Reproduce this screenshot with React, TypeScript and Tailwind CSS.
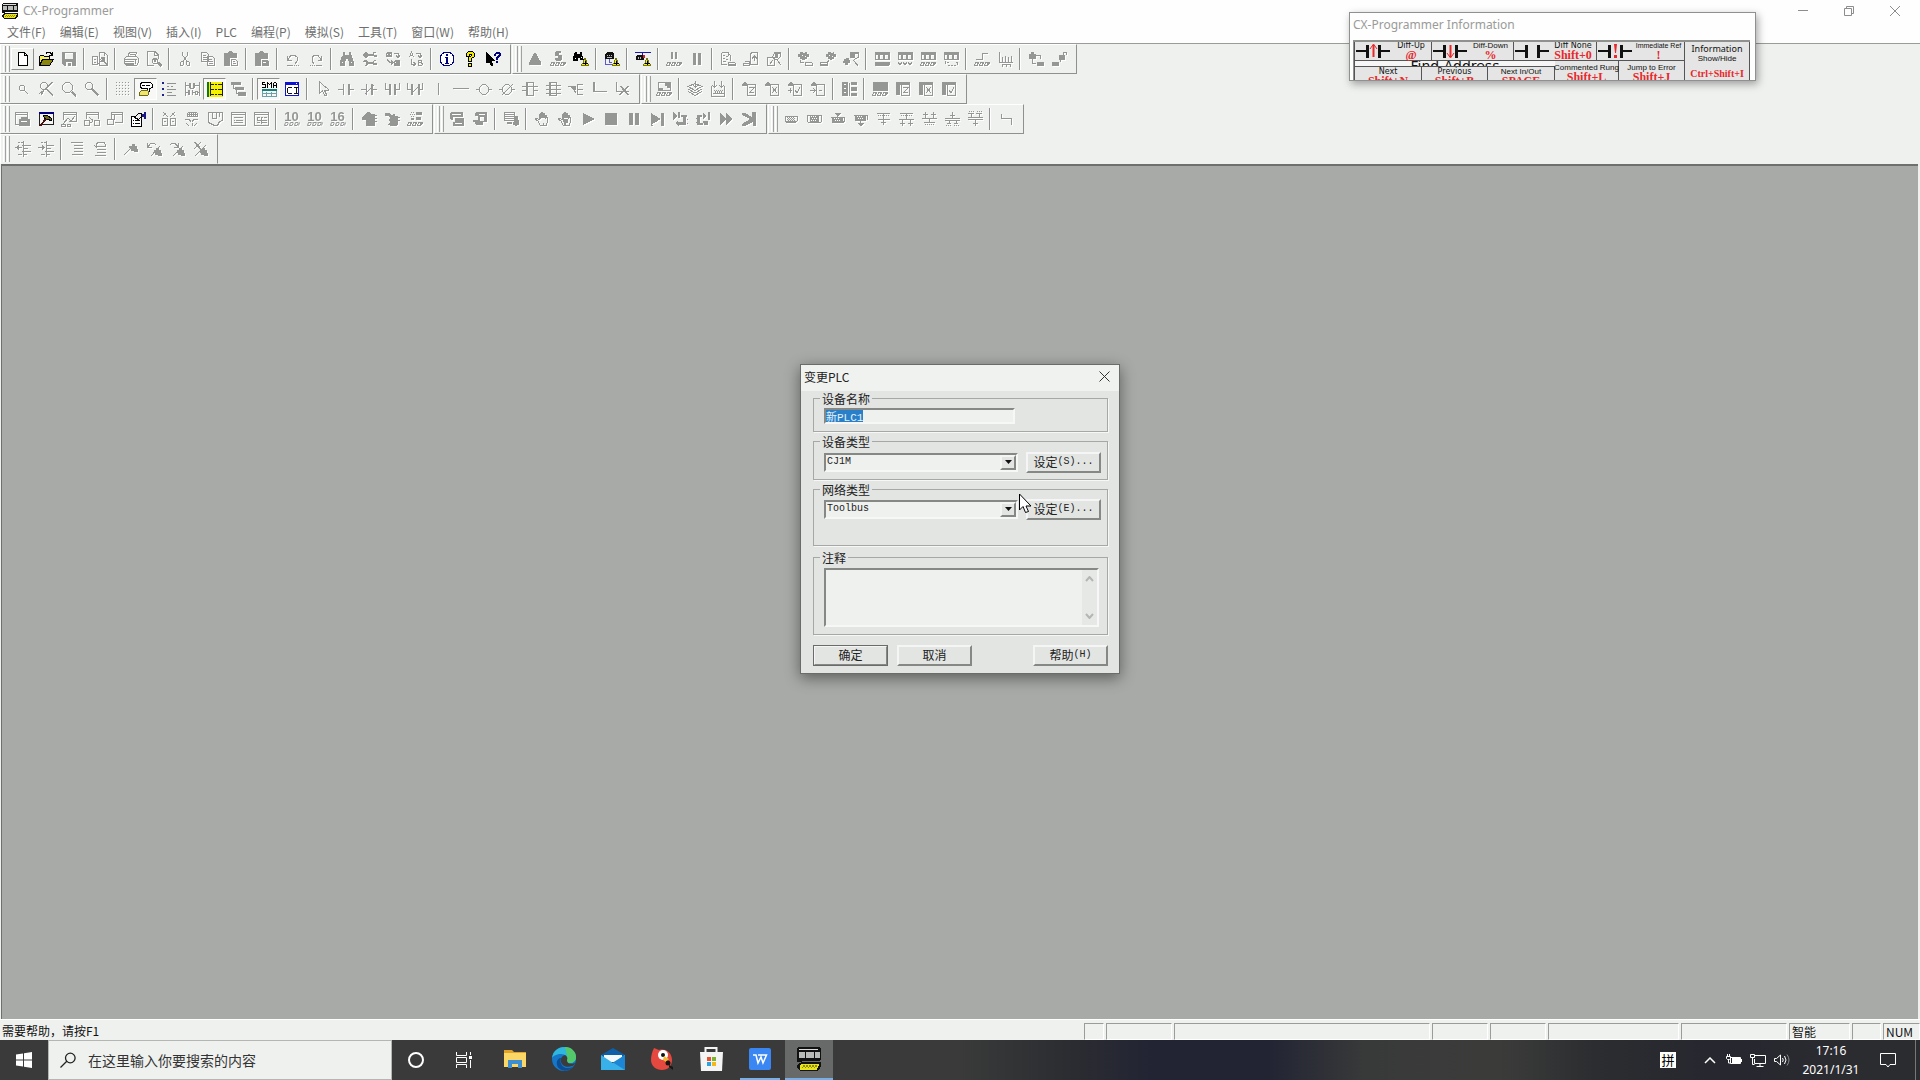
import { useEffect, useRef } from 'react';
import type { ReactNode } from 'react';

interface Glyph {
  f?: string; // filled shapes
  s?: string; // 1px outlines
}

// shared parts of the toolbar drawings
const GLASSES = 'M.5 14.5l1-3h2.5v1l-1 2zM5.5 14.5l1-3h2.5v1l-1 2zM10.5 14.5l1-3h2.5v1l-1 2zM14.5 14.5l1-3';
const CHIP = 'M8.5 11.5h6l1 1v2h-7z';
const COIL = 'M1 1h14l1 1v7H1zM2 4v4h2V4zM6 4v4h3V4zM11 4v4h3V4z';
const HASP = 'M0 5h1V3h1V2h1V1h2v1h1v1h1v2z';
const PAGE = 'M6.5 3.5h8v11h-8z';
const PANEL = 'M1 1h14v3H5v10H1z';
const HAND = 'M5.5 9V3.5l1-1v5M7.5 7V1.5h1V7M9.5 7V2.5h1V7M11.5 8V4.5h1l1 4v3l-2 3h-5l-3-5-2-1v-1h2l2 2M12.5 12v3';

const GLYPHS: Record<string, Glyph> = {
  save: { f: 'M1 1h14v14H3l-2-2zM4 2v6h8V2zM5 11v4h2v-3h3v3h1v-4z' },
  compareDocs: { s: 'M.5 5.5h5v8h-5zM7.5 1.5h5l3 3v10h-8zM12.5 1v4M2 8.5h2M2 11.5h2M6 13l4-4M9 8.5a2 2 0 1 0 4 0a2 2 0 1 0-4 0M12 10l3 4', f: 'M10 7h2v4h-2z' },
  print: { s: 'M4.5 6l2-4.5h7l-2 5M1.5 7.5l2-2h10l2 2v4l-2 3h-10l-2-2zM2 8.5h12M7 3.5h5M6 5.5h5M12.5 9v4', f: 'M2 10h9v1H2zM2 12h9v2H2z' },
  preview: { s: 'M1.5 1v13.5h6M1 .5h8l3 3v4M8.5 1v3h3M6.5 9.5l1-2h3l1 2v2l-1 1h-3l-1-1z', f: 'M8 8h2v3H8zM11 11h2l3 3-1 2h-1l-3-3z' },
  cut: { s: 'M5.5 1v3l4 6M10.5 1v3l-4 6M3.5 11.5l1-1h2v3l-1 1h-2zM9.5 10.5h2l1 1v3h-2l-1-1z' },
  copy: { s: 'M1.5 1.5h5l2 2v7h-7zM7.5 5.5h5l2 2v7h-7zM3 4.5h3M3 6.5h4M3 8.5h4M9 8.5h3M9 10.5h4M9 12.5h4' },
  paste: { f: 'M1 2h4V1h1V0h3v1h1v1h4v5H7v8H1z', s: 'M8.5 8.5h4l2 2v4h-6zM10 10.5h2M10 12.5h3' },
  paste2: { f: 'M1 2h4V1h1V0h3v1h1v1h4v6H7v7H1zM8 9h5l2 2v4H8zM9 11v1h3v-1z' },
  undo: { s: 'M2.5 5v4.5h4M3 9l3-5h3l3 2v4l-2 3M2 14.5h6M9 14.5h1M11 14.5h1M13 14.5h1' },
  redo: { s: 'M13.5 5v4.5h-4M13 9l-3-5H7L4 6v4l2 3M14 14.5H8M7 14.5H6M5 14.5H4M3 14.5H2' },
  find: { f: 'M4 1h2v3h4V1h2v3l1 1 2 6v4h-5v-5H9V8H7v2H6v5H1v-4l2-6 1-1zM3 11v1h1v-1zM12 11v1h1v-1z' },
  replace: { f: 'M1 3l2-2h2l1 2h5V1h3v1h-2v2h3v1l-1 1h-2l-1-1H6L5 7H3L1 5zM1 10l1-1h3l1 2h4l2-2h2v1h-2v2h3v1l-1 1h-2l-2-1H6l-1 2H3l-1-1h2v-3H1z' },
  replaceAll: { f: 'M1 2h1V1h5v5H1zM2 3v1h1V3zM5 3v1h1V3zM9 10h1V9h5v6H9zM10 11v1h1v-1z', s: 'M2 8.5l3 3M9 2.5h4v4M11 4.5l2 2 2-2M4 11.5h4M6 9.5l2 2-2 2' },
  aToB: { s: 'M1.5 6l2-5 2 5M2 4.5h3M8 2.5h4v4M10 4.5l2 2 2-2M3.5 8v5h4M5.5 11l2 2-2 2M10.5 9v5.5h3l1-1-1-2h-3M13 11l1-1-1-1h-3' },
  tri: { f: 'M7 2h2l1 2 1 2 1 2 1 2 1 1v3H2v-3l1-1 1-2 1-2 1-2z' },
  lampGlasses: { s: GLASSES, f: 'M6 0h5v2H9v2h3v4l-2 2H6L5 7h3V5H5V1z' },
  pauseGlasses: { s: GLASSES, f: 'M5 1h2v7H5zM9 1h2v7H9z' },
  pause: { f: 'M4 2h3v12H4zM9 2h3v12H9z' },
  docChip: { s: 'M1.5 1.5h6l3 3v5M1.5 1.5v12h5M3 4.5h2M6 5.5h2M3 7.5h2M6 8.5h2M3 10.5h3' + CHIP, f: 'M9 13h6v1H9zM8 1h1v4H8z' },
  chipDoc: { s: 'M1.5 10.5h5v4h-6v-3M7.5 2.5l2-1h5v12h-7zM11.5 5v5M9 7.5l2.5-2.5L14 7.5', f: 'M1 12h5v1H1z' },
  magDoc: { s: 'M1.5 6.5h7v8h-7zM8.5 1.5h6v4l-3 3h-3l-2-2zM7 9l-3 4M11 9l4 5', f: 'M9 3h3v4H9zM8 1h7v2H8z' },
  cloudChipA: { f: 'M3 1h3v1h2V1h2v2h2v3h-2v2H8v1H5V8H3V6H1V3h2zM5 4v1h1V4zM8 5v1h1V5z', s: 'M3.5 9v2.5H7' + CHIP },
  cloudChipB: { f: 'M8 1h3v1h2V1h1v2h2v3h-2v2h-2v1h-2V8H8V6H6V3h2zM9 4v1h1V4zM12 5v1h1V5z', s: 'M.5 11.5h7v3h-7zM1 13.5h6M9 9.5l-2 2' },
  cloudMag: { f: 'M1 8h2V7h3v2h1v3H5v2H2v-2H0v-2h1zM7 1h9v2H7zM7 3h5v4H7z', s: 'M15.5 2v4l-4 2.5M10 9l5 5.5' },
  plcA: { f: COIL + 'M1 11h15v2l-2 2H1z' },
  plcB: { f: COIL, s: 'M1 11.5l2 2 2-2M6 11.5l2 2 2-2M11 11.5l2 2 2-2' },
  plcC: { f: COIL, s: GLASSES },
  plcD: { f: COIL, s: 'M2.5 10v3M4 11.5h2M5 14.5h2M8 14.5h2M11 14.5h2M13 11.5h2M14.5 12v2' },
  stepGlasses: { s: GLASSES + 'M2 8.5h6v-6h6' },
  trace: { s: 'M2.5 1v10.5h13M5.5 11V6M8.5 11V5M11.5 11V6M14.5 11V5M5.5 13v2.5M9.5 13v2.5M13.5 13v2.5M5 13.5h9' },
  lockChip: { f: 'M1 3h2V1h3v2h2v5H1zM9 11h6l1 1v3H9z', s: 'M8 4.5h4v3M4.5 8v4.5H8' },
  unlockChip: { f: 'M8 4h6v5H8zM1 11h7v4H1z', s: 'M12.5 4V1.5h3V4M9.5 8v3' },
  zoomSmall: { s: 'M4.5 5.5l1-1h3l1 1v3l-1 1h-3l-1-1zM9 9l4 4' },
  zoomCut: { s: 'M2.5 3.5l2-2h3l2 2v3l-2 2h-3l-2-2zM8 8l7 7M9 8l6 6M15 1L5 10l-4 3M14 1L3 12M3 14l3-4' },
  zoomOut: { s: 'M1.5 4.5l3-3h4l3 3v4l-3 3h-4l-3-3zM11 10l4.5 4.5M10 11l5 5M11 11l4 4' },
  zoomIn: { s: 'M1.5 3.5l2-2h3l2 2v3l-2 2h-3l-2-2zM8 7l7 7M7 8l7 7M8 8l6.5 6.5' },
  grid: { f: 'M1 1h1v1H1zM4 1h1v1H4zM7 1h1v1H7zM10 1h1v1h-1zM13 1h1v1h-1zM1 4h1v1H1zM4 4h1v1H4zM7 4h1v1H7zM10 4h1v1h-1zM13 4h1v1h-1zM1 7h1v1H1zM4 7h1v1H4zM7 7h1v1H7zM10 7h1v1h-1zM13 7h1v1h-1zM1 10h1v1H1zM4 10h1v1H4zM7 10h1v1H7zM10 10h1v1h-1zM13 10h1v1h-1zM1 13h1v1H1zM4 13h1v1H4zM7 13h1v1H7zM10 13h1v1h-1zM13 13h1v1h-1z' },
  rungs: { s: 'M1.5 1v14M15.5 1v14M2 4.5h4M10 4.5h5M2 11.5h3M9 11.5h2M14 11.5h1M11.5 10v3h2v-3z', f: 'M5 2h2v5H5zM9 2h2v5H9zM4 9h2v5H4zM8 9h1v5H8zM6 7h4v1H6z' },
  tree: { f: 'M1 1h10v3H1zM5 6h9v3H5zM8 11h8v4H8z', s: 'M3.5 4v3.5h2M6.5 9v3.5h2' },
  arrow: { s: 'M4.5 1v11.5l3-3 2 5h2v-1l-2-4h4v-1z' },
  contactOpen: { f: 'M5 3h1v11H5zM10 3h2v11h-2zM0 8h5v1H0zM12 8h4v1h-4z' },
  contactClosed: { s: 'M4 13l9-9', f: 'M5 3h1v11H5zM10 3h2v11h-2zM0 8h5v1H0zM12 8h4v1h-4z' },
  orOpen: { s: 'M1.5 2v6.5h4M15.5 2v6.5h-4', f: 'M5 3h2v11H5zM10 3h2v11h-2z' },
  orClosed: { s: 'M.5 2v6.5h4M15.5 2v6.5h-4M4 13l9-9', f: 'M4 3h2v11H4zM11 3h2v11h-2z' },
  vline: { f: 'M8 2h1v12H8z' },
  hline: { f: 'M0 7h16v1H0z' },
  coilOut: { f: 'M0 8h4v1H0zM12 8h4v1h-4z', s: 'M6.5 3.5h3l3 3v4l-3 3h-3l-3-3v-4z' },
  coilNot: { f: 'M0 8h4v1H0zM12 8h4v1h-4z', s: 'M6.5 3.5h3l3 3v4l-3 3h-3l-3-3v-4zM3 14L14 3' },
  fb1: { s: 'M4.5 1.5h7v13h-7zM5.5 2v12M0 5.5h16M0 9.5h4M12 9.5h4' },
  fb2: { s: 'M4.5 1.5h7v13h-7zM5.5 2v12M1 4.5h15M1 8.5h15M1 12.5h15' },
  branch: { s: 'M0 5.5h8M3 5l5 7M9.5 3v11M9 3.5h6M9 8.5h6M9 13.5h6', f: 'M3 5h5v4H6z' },
  corner: { f: 'M2 1h2v9h12v1H2z' },
  cornerX: { f: 'M2 1h1v9h12v1H2z', s: 'M5 14l9-9M6 14l9-9M6 5l8 9M7 5l8 9' },
  monitorGlasses: { s: GLASSES + 'M2.5 1.5h12v8h-12z', f: 'M9 1h5v6h-3V5H9zM2 7h5v3H2z' },
  stack: { s: 'M1 5.5l7-3 7 3-7 4zM1 8l7 4 7-4M1 10.5l7 4 7-4M8.5 0v6M6 4l2.5 2.5L11 4M3 7l6 3' },
  stackAll: { s: 'M1.5 5v10h13V5M4 9.5h1M6 9.5h1M8 9.5h1M10 9.5h1M12 9.5h1M3 12.5h11M4.5 0v6M2 4l2.5 2.5L7 4M11.5 0v6M9 4l2.5 2.5L14 4', f: 'M5 10h1v2H5zM7 10h1v2H7zM9 10h1v2H9zM11 10h1v2h-1z' },
  docZ: { f: HASP, s: PAGE + 'M8 6.5h5l-4 5h4' },
  docX: { f: HASP, s: PAGE + 'M8 6l5 6M13 6l-5 6' },
  docOk: { f: HASP, s: PAGE + 'M8 9l2 3 3-6M1 9.5h4M3.5 7v5' },
  docArrow: { f: HASP, s: PAGE + 'M0 9.5h5M3 7l2.5 2.5L3 12M9 9.5h3' },
  film: { f: 'M1 1h6v14H1zM8 2h1v13H8zM10 1h6v3h-6zM10 6h6v4h-6zM10 12h6v3h-6zM3 3v1h2V3zM3 7v1h2V7zM3 11v1h2v-1z' },
  boxGlasses: { s: GLASSES, f: 'M1 1h15v9H1z' },
  panelZ: { f: PANEL, s: PAGE + 'M8 6.5h5l-4 5h4' },
  panelX: { f: PANEL, s: PAGE + 'M8 6l5 6M13 6l-5 6' },
  panelOk: { f: PANEL, s: PAGE + 'M8 9l2 3 3-6' },
  winDoc: { s: 'M.5 1.5h12v12H.5zM1 3.5h11', f: 'M4 8h2V6h6v2h3v7H4zM6 10v1h7v-1z' },
  winTool: { s: 'M2.5 9V1.5h13v9H8M2 3.5h13M2 13l5-6 3 3 4-5M.5 13.5h4v2h-4zM6.5 13.5h3v2h-3z' },
  winPair: { s: 'M2.5 8V1.5h12V8M2 3.5h12M.5 9.5h5v5h-5zM10.5 9.5h5v5h-5zM6 11.5h2M8 8v3M5 6l3 3' },
  winBox: { s: 'M4.5 8V1.5h11v10H8M.5 8.5h6v5h-6zM5 3.5h10M7.5 4v5' },
  split: { s: 'M1.5 7.5h5v7h-5zM9.5 7.5h5v7h-5zM2 1l5 5M14 1L9 6M2 5l3-3M11 2l3 3M3 10.5h2M11 10.5h2' },
  mesh: { s: 'M4.5 1.5h8l1 1v3h-10v-3zM4 3.5h9M1 8.5h4l2 2M14 8.5h-4l-2 2M2 12l3 3M8 12v3M13 12l-3 3', f: 'M5 2h1v3H5zM7 2h1v3H7zM9 2h1v3H9zM11 2h1v3h-1z' },
  map: { s: 'M1.5 1.5h14v8l-3 1-2 4h-3l-6-3zM5.5 2v6M9.5 2v5M5 7.5h5M12.5 2v4' },
  list: { s: 'M1.5 1.5h14v13h-14zM2 3.5h13M4 6.5h9M4 9.5h1M6 9.5h7M4 11.5h9' },
  table: { s: 'M1.5 1.5h14v13h-14zM2 3.5h13M4 6.5h3M8 6.5h2M11 6.5h3M4.5 7v2h3M9 9.5h5M4 11.5h3M9 11.5h5M8.5 6v7' },
  upload: { f: 'M6 1h2l2 2h4v1h2v1h-2v2h2v1h-2v2h2v1h-2v4H5V9H1V6z' },
  download: { f: 'M1 2h4l3 3 1-2h2v2h3v1h2v1h-2v2h2v1h-2v3l-2 2H7l-3-1 2-3-2-2 2-2-2-2H1z' },
  xferGlasses: { s: GLASSES, f: 'M4 1h1v1H4zM6 1h1v1H6zM3 3h1v1H3zM5 3h1v1H5zM7 3h1v1H7zM9 1h6v3H9zM4 5h1v1H4zM6 5h1v1H6zM9 6h5v3H9zM4 7h3v2H4z' },
  cards: { f: 'M1 2l1-1h12v5H4v3H2L1 8zM3 3v1h9V3zM6 7h9v7l-1 1H4v-4h2zM6 12v1h7v-1z' },
  cards2: { f: 'M3 2l1-1h11v9l-1 1h-3v3H4l-1-3H1V9h5V5H3zM7 3v1h6V3zM8 6h4v4H8z' },
  listDoc: { s: 'M1.5 1.5h10v8h-10zM2 3.5h9M2 5.5h9M2 7.5h9', f: 'M11 5h4v4h1v5h-2v1h-2v-1h-2v-3h1zM4 11h5v2H4z' },
  hand: { s: HAND + 'M9.5 12v3' },
  handX: { s: HAND, f: 'M6 8h5v4H9v3H7v-4H6z' },
  play: { f: 'M3 2l12 6-12 6z' },
  stop: { f: 'M2 2h12v12H2z' },
  pauseBig: { f: 'M3 2h4v12H3zM9 2h4v12H9z' },
  stepEnd: { f: 'M2 2l10 6-10 6zM12 2h3v13h-3zM2 14h2v1H2z' },
  stepIn: { f: 'M1 1l5 4-5 4zM6 1h2v6H6zM9 4h6v2h-1v8H7v1l-4-3 3-3v2h5V6H9zM15 8h1v1h-1zM15 12h1v1h-1z' },
  stepOut: { f: 'M2 4h5v2H5v6h4v2H2zM1 7h1v1H1zM1 11h1v1H1zM8 2l4 3-4 3zM13 1h2v8h-2zM8 10h5v4H8z' },
  fast: { f: 'M2 2l6 6-6 6zM8 2l7 6-7 6z' },
  fastEnd: { f: 'M1 2h3l7 4V1h4v14h-3v-4l-8 4H1v-2l8-5-8-4z' },
  fbA: { f: 'M4 6h1v1H4zM6 6h1v1H6zM8 6h1v1H8zM10 6h1v1h-1zM5 7h1v1H5zM7 7h1v1H7zM9 7h1v1H9zM4 8h1v1H4zM6 8h1v1H6zM8 8h1v1H8zM10 8h1v1h-1zM5 9h1v1H5zM7 9h1v1H7zM9 9h1v1H9zM11 9h1v1h-1zM11 7h1v1h-1zM3 10h10v1H3z', s: 'M2 5.5h12.5v4l-2 2h-9l-1-2v-4' },
  fbB: { f: 'M4 4h9v8H4zM5 5v1h1V5zM7 5v1h1V5zM9 5v1h1V5zM6 7v1h1V7zM8 7v1h1V7zM10 7v1h1V7zM5 9v1h1V9zM7 9v1h1V9zM9 9v1h1V9z', s: 'M1.5 4.5h14v6l-1 1h-12l-1-1z' },
  fbC: { f: 'M5 2h7L9 5H8zM3 6h11v6H3zM5 7v1h1V7zM7 7v1h1V7zM9 7v1h1V7zM6 9v1h1V9zM8 9v1h1V9zM10 9v1h1V9z', s: 'M2 6.5h13v4l-1 1M8.5 4v2' },
  fbD: { f: 'M5 12h7l-3 3H8zM3 4h11v6H3zM5 5v1h1V5zM7 5v1h1V5zM9 5v1h1V5zM6 7v1h1V7zM8 7v1h1V7zM10 7v1h1V7z', s: 'M2 4.5h13v4M8.5 10v3' },
  netA: { s: 'M2 2.5h13M3 4.5h1M5 4.5h1M7 4.5h1M9 4.5h1M11 4.5h1M13 4.5h1M8.5 3v11M3 8.5h12M6 11.5h5' },
  netB: { s: 'M2 2.5h13M3 4.5h1M5 4.5h1M7 4.5h1M9 4.5h1M11 4.5h1M13 4.5h1M8.5 3v5M1 8.5h15M4.5 9v6M12.5 9v6M2 12.5h5M10 12.5h5' },
  netC: { s: 'M1 7.5h15M4.5 1v6M12.5 1v6M2 3.5h5M10 3.5h5M8.5 8v3M3 11.5h11M4 13.5h1M6 13.5h1M8 13.5h1M10 13.5h1M12 13.5h1' },
  netD: { s: 'M1 7.5h15M8.5 1v6M6 4.5h5M1 9.5h15M3 12.5h4M10 12.5h4M5.5 10v3M12.5 10v3M2 14.5h1M4 14.5h1M6 14.5h1M10 14.5h1M12 14.5h1M14 14.5h1' },
  netE: { s: 'M1 2.5h6M9 2.5h6M2 .5h1M4 .5h1M6 .5h1M10 .5h1M12 .5h1M14 .5h1M4.5 3v4M12.5 3v4M1 6.5h15M1 8.5h15M8.5 9v6M6 12.5h5' },
  zig: { s: 'M3.5 3v4.5h10V14M3 3.5h1' },
  outdent: { s: 'M3 1.5h2M6 1.5h3M7 4.5h9M8 7.5h5M7 10.5h9M3 13.5h4M8 13.5h4M3 6.5h4M8.5 0v16', f: 'M0 6h2V5h1V4h1v5H3V8H2V7H0z' },
  indent: { s: 'M3 1.5h2M6 1.5h3M9 4.5h7M9 7.5h4M7 10.5h9M3 13.5h4M8 13.5h4M0 6.5h4M8.5 0v16', f: 'M7 6H6V5H5V4H4v5h1V8h1V7h1z' },
  lines: { s: 'M2 1.5h12M5 4.5h9M5 7.5h9M5 10.5h9M3 13.5h11' },
  linesBack: { s: 'M4 5.5h9V3l-1-1.5H6L4.5 3v4M2 4l2.5 2.5M5 8.5h9M5 11.5h9M3 14.5h11' },
  flag: { f: 'M9 3h3v2h2v3h1v3h-4v-1H8V7H6V5h3z', s: 'M1 14L12 3' },
  flagPrev: { f: 'M10 7h3v2h2v3h1v3h-4v-1H9v-2H8V9h2z', s: 'M5 15l9-10M1.5 2v4.5H6M2 6l3-4h3l2 2' },
  flagNext: { f: 'M10 7h3v2h2v3h1v3h-4v-1H9v-2H8V9h2z', s: 'M4 15L14 5M9.5 2v4.5H5M9 6L6 2H3L1 4' },
  flagDel: { f: 'M10 7h3v2h2v3h1v3h-4v-1H9v-2H8V9h2z', s: 'M3 15L14 4M2 1l7 8M9 1L2 8M3 1l7 8' },
};

const WARN = (
  <>
    <path d="M8.5 14.5v-1l2-2 1-4h1l1 4 2 2v1z" fill="#f5f200" stroke="#77731c" />
    <path d="M10 12.5h5M12.5 10v4" stroke="#000" />
  </>
);

// icons that stay enabled, drawn in their own colours
const COLOURED: Record<string, ReactNode> = {
  new: <path d="M3.5 1.5h6l3 3v10h-9zM9.5 1.5v3h3" fill="#fff" stroke="#000" />,
  open: (
    <>
      <path d="M1.5 14V5.5l1-1h3l1 1h5v3" fill="#f3ef62" stroke="#000" />
      <path d="M1.5 14.5l3-6h11l-4 6z" fill="#8a8410" stroke="#000" />
      <path d="M8 2.5l1-1h3l2 2M14.5 1v3.5H11" fill="none" stroke="#000" />
    </>
  ),
  info: (
    <>
      <circle cx="8" cy="8" r="7" fill="#fff" stroke="#00007c" />
      <path d="M7 3h2v2H7zM6 6h3v6h1v1H6v-1h1V7H6z" fill="#00007c" />
    </>
  ),
  help: <path d="M4.5 5.5v-3l2-2h4l2 2v3l-3 2v3h-3v-4l3-2v-1h-2v2zM6.5 12.5h3v3h-3z" fill="#f3ec00" stroke="#000" />,
  whatsThis: (
    <>
      <path d="M1 1v11h2l1-1 2 4h2v-2l-1-3h3V9z" fill="#000" />
      <path d="M9 3l2-2h3l2 2v2l-3 2v2h-2V6l3-2-1-1h-2v2H9zM11 10h2v2h-2z" fill="#00007c" />
    </>
  ),
  findWarn: (
    <>
      <path d="M2 1h2v2h3V1h2v3l2 5H7V7H5v3H0V6z" fill="#000" />
      <path d="M2 7h1v1H2zM8 6h1v1H8z" fill="#fff" />
      {WARN}
    </>
  ),
  plcWarn: (
    <>
      <path d="M1 3l2-2h6l1 2v5H1z" fill="#111" />
      <path d="M3 4.5h1M5 4.5h1M7 4.5h1M3 6.5h5" stroke="#bbb" />
      <path d="M1.5 8v5.5h6M5 8v3.5h3" stroke="#5a5ad0" fill="none" />
      {WARN}
    </>
  ),
  lineWarn: (
    <>
      <path d="M0 1h16v1H0zM7 2h1v2H7z" fill="#1a1ab0" />
      <path d="M1 5l1-1h7v5H1z" fill="#111" />
      <path d="M3 6h1v2H3zM5 6h1v2H5z" fill="#bbb" />
      <path d="M8 4h2v3H8z" fill="#c22" />
      {WARN}
    </>
  ),
  comment: (
    <>
      <path d="M2.5 2.5l2-1h8l2 2v3l-3 1v3h-2v-3h-5l-2-1z" fill="#fff" stroke="#000" />
      <path d="M4 4.5h3M8 4.5h4" stroke="#000" />
      <path d="M1.5 11.5l2-2h6l1 1v3l-1 1h-8z" fill="#efe66a" stroke="#6d6820" />
    </>
  ),
  bullets: (
    <>
      <path d="M1 1h2v2H1zM1 7h2v2H1zM1 13h2v2H1z" fill="#20208a" />
      <path d="M6 2.5h9M6 8.5h9M6 14.5h9M6 5.5h2M10 5.5h2M6 11.5h5" stroke="#8f918f" />
    </>
  ),
  ladder: (
    <>
      <path d="M0 1h2v15H0z" fill="#0b7a12" />
      <path d="M2 1h14v15H2z" fill="#f5f200" />
      <path d="M3.5 1v14M15.5 1v14M4 3.5h12M4 8.5h12M4 13.5h12" stroke="#222" />
      <path d="M7 3h1v1H7zM10 3h1v1h-1zM7 8h1v1H7zM10 8h1v1h-1zM7 13h1v1H7zM10 13h1v1h-1z" fill="#f5f200" />
    </>
  ),
  sma: (
    <>
      <path d="M4 1.5H1.5v2h3v3H1M6.5 7V1.5l2 2 2-2V7M12.5 7V2.5l1-1h1l1 1V7M12 4.5h3" stroke="#000" fill="none" />
      <path d="M1 8h15v2H1z" fill="#11807c" />
      <path d="M1.5 10v5.5h14V10M1 12.5h15M5.5 11v4M10.5 11v4" stroke="#6ba0ad" fill="none" />
    </>
  ),
  ci: (
    <>
      <path d="M1.5 1.5h13v13h-13z" fill="#fff" stroke="#1010d0" />
      <path d="M1 1h14v3H1z" fill="#1010d0" />
      <path d="M12 2h1v1h-1z" fill="#fff" />
      <path d="M8 6.5H5l-1.5 1v4l1.5 1h3M10 6.5h4M12 6v6M10 12.5h4" stroke="#111" fill="none" />
    </>
  ),
  hammer: (
    <>
      <path d="M1.5 1.5h14v12h-14z" fill="#f4f4f2" stroke="#222" />
      <path d="M1 1h15v2H1z" fill="#00007c" />
      <path d="M5 5l4-1 5 4-1 2-3-2-2 1z" fill="#6b6a1a" stroke="#000" />
      <path d="M8 8l-6 7" stroke="#4a1010" strokeWidth="2" />
    </>
  ),
  props: (
    <>
      <path d="M1.5 5.5h10v10h-10z" fill="#fff" stroke="#000" />
      <path d="M3 9.5h1M5 9.5h5M3 12.5h1M5 12.5h5" stroke="#000" />
      <path d="M4.5 6.5l4-4h3v3l-3 3z" fill="#eee" stroke="#000" />
      <path d="M12 3h2V1h2v7h-2V6h-2z" fill="#1a1a86" />
    </>
  ),
};

const NUMBERS: Record<string, string> = { n10: '10', n10b: '10', n16: '16' };

const ROWS: string[][][][] = [
  [
    [['new', 'open', 'save'], ['compareDocs'], ['print', 'preview'], ['cut', 'copy', 'paste'], ['paste2'], ['undo', 'redo'], ['find', 'replace', 'replaceAll', 'aToB'], ['info', 'help', 'whatsThis']],
    [['tri', 'lampGlasses', 'findWarn'], ['plcWarn'], ['lineWarn'], ['pauseGlasses', 'pause'], ['docChip', 'chipDoc', 'magDoc'], ['cloudChipA', 'cloudChipB', 'cloudMag'], ['plcA', 'plcB', 'plcC', 'plcD'], ['stepGlasses', 'trace'], ['lockChip', 'unlockChip']],
  ],
  [
    [['zoomSmall', 'zoomCut', 'zoomOut', 'zoomIn'], ['grid', 'comment', 'bullets', 'rungs', 'ladder', 'tree'], ['sma', 'ci'], ['arrow', 'contactOpen', 'contactClosed', 'orOpen', 'orClosed', 'vline', 'hline', 'coilOut', 'coilNot', 'fb1', 'fb2', 'branch', 'corner', 'cornerX']],
    [['monitorGlasses'], ['stack', 'stackAll'], ['docZ', 'docX', 'docOk', 'docArrow'], ['film'], ['boxGlasses', 'panelZ', 'panelX', 'panelOk']],
  ],
  [
    [['winDoc', 'hammer', 'winTool', 'winPair', 'winBox', 'props'], ['split', 'mesh', 'map', 'list', 'table'], ['n10', 'n10b', 'n16'], ['upload', 'download', 'xferGlasses']],
    [['cards', 'cards2'], ['listDoc'], ['hand', 'handX', 'play', 'stop', 'pauseBig', 'stepEnd', 'stepIn', 'stepOut', 'fast', 'fastEnd']],
    [['fbA', 'fbB', 'fbC', 'fbD', 'netA', 'netB', 'netC', 'netD', 'netE'], ['zig']],
  ],
  [[['outdent', 'indent'], ['lines', 'linesBack'], ['flag', 'flagPrev', 'flagNext', 'flagDel']]],
];

const PRESSED = ['comment', 'ladder', 'sma'];

function ToolIcon({ name }: { name: string }) {
  if (COLOURED[name]) {
    return (
      <svg width="16" height="16" viewBox="0 0 16 16" shapeRendering="crispEdges">
        {COLOURED[name]}
      </svg>
    );
  }
  if (NUMBERS[name]) {
    return (
      <span className="flex flex-col items-center text-[#959795] drop-shadow-[1px_1px_0_#fff]">
        <span className="font-['Liberation_Sans'] text-[13px] leading-[11px] font-bold">{NUMBERS[name]}</span>
        <svg width="16" height="5" viewBox="0 11 16 5" fill="none" stroke="currentColor">
          <path d={name === 'n10b' ? GLASSES + 'M1 11h14' : GLASSES} />
        </svg>
      </span>
    );
  }
  const g = GLYPHS[name];
  return (
    <svg
      width="16"
      height="16"
      viewBox="0 0 16 16"
      shapeRendering="crispEdges"
      className="text-[#959795] drop-shadow-[1px_1px_0_#fff]"
    >
      {g.f && <path d={g.f} fill="currentColor" fillRule="evenodd" />}
      {g.s && <path d={g.s} fill="none" stroke="currentColor" />}
    </svg>
  );
}

function ToolButton({ name }: { name: string }) {
  let frame = 'border-transparent';
  if (name === 'new') frame = 'border-t-white border-l-white border-r-[#8f918f] border-b-[#8f918f]';
  if (PRESSED.includes(name)) frame = 'bg-[#f8f8f7] border-t-[#8f918f] border-l-[#8f918f] border-r-white border-b-white';
  return (
    <button type="button" aria-label={name} className={`flex h-[22px] w-[23px] items-center justify-center border ${frame}`}>
      <ToolIcon name={name} />
    </button>
  );
}

function Grip() {
  return (
    <div className="mr-px flex h-[26px] gap-px">
      <div className="w-[3px] border-r border-l border-r-[#a0a2a0] border-l-white" />
      <div className="w-[3px] border-r border-l border-r-[#a0a2a0] border-l-white" />
    </div>
  );
}

function ToolBar({ groups, last }: { groups: string[][]; last: boolean }) {
  return (
    <div
      className={`flex h-[30px] items-center border border-t-white border-r-[#8f918f] border-l-white pr-[6px] pl-[2px] ${last ? 'border-b-transparent' : 'border-b-[#8f918f]'}`}
    >
      <Grip />
      {groups.map((group, i) => (
        <div key={i} className="flex items-center">
          {i > 0 && <div className="mx-[3px] h-[22px] w-[2px] border-l border-[#8f918f] bg-white" />}
          {group.map((name) => (
            <ToolButton key={name} name={name} />
          ))}
        </div>
      ))}
    </div>
  );
}

function PlcLogo({ size }: { size: number }) {
  return (
    <svg width={size} height={size} viewBox="0 0 16 16" shapeRendering="crispEdges">
      <path d="M0 1l1-1h14l1 1v7l-1 1H0z" fill="#111" />
      <path d="M1 3h4v4H1zM6 3h5v4H6zM12 3h3v4h-3z" fill="#b9bbb9" />
      <path d="M1 1h13v1H1z" fill="#ddd" />
      <path d="M0 8h3v2H0zM3 10h13v3l-2 3H2l-2-2v-2z" fill="#111" />
      <path d="M2 12l2-1h11l-2 4H2z" fill="#e9e414" />
      <path d="M4 12.5h10M3 13.5h10" stroke="#8d8a10" strokeDasharray="1 1" />
    </svg>
  );
}

const MENUS = ['文件(F)', '编辑(E)', '视图(V)', '插入(I)', 'PLC', '编程(P)', '模拟(S)', '工具(T)', '窗口(W)', '帮助(H)'];

function TitleBar() {
  return (
    <header className="bg-[#fdfefd]">
      <div className="flex h-[22px] items-center pl-[2px]">
        <PlcLogo size={16} />
        <h1 className="ml-[5px] flex-1 font-['Noto_Sans',sans-serif] text-[12px] text-[#9a9b9a]">CX-Programmer</h1>
        <div className="flex pr-[2px] text-[#8c8d8c]">
          <button type="button" aria-label="minimize" className="flex h-[20px] w-[46px] items-center justify-center">
            <svg width="10" height="10" stroke="currentColor"><path d="M0 4.5h10" /></svg>
          </button>
          <button type="button" aria-label="restore" className="flex h-[20px] w-[46px] items-center justify-center">
            <svg width="10" height="10" fill="none" stroke="currentColor"><path d="M.5 2.5h7v7h-7zM2.5 2V.5h7v7H8" /></svg>
          </button>
          <button type="button" aria-label="close" className="flex h-[20px] w-[46px] items-center justify-center">
            <svg width="10" height="10" stroke="currentColor"><path d="M0 0l10 10M10 0L0 10" /></svg>
          </button>
        </div>
      </div>
      <nav className="flex h-[21px] items-start text-[12px] text-[#6e6f6e]">
        {MENUS.map((m) => (
          <button key={m} type="button" className="px-[7px] leading-[20px]">{m}</button>
        ))}
      </nav>
    </header>
  );
}

const NARROW = "font-['Liberation_Sans'] text-[8px]";
const WIDE = "font-['DejaVu_Sans'] text-[8px]";

const CONTACTS = [
  { label: 'Diff-Up', key: '@', mark: '↑', box: 'w-[77px]', font: WIDE },
  { label: 'Diff-Down', key: '%', mark: '↓', box: 'w-[82px]', font: NARROW },
  { label: 'Diff None', key: 'Shift+0', mark: '', box: 'w-[83px]', font: WIDE },
  { label: 'Immediate Ref', key: '!', mark: '!', box: 'w-[88px]', font: "font-['Liberation_Sans'] text-[7px]" },
];

function Contact({ mark }: { mark: string }) {
  return (
    <svg width="36" height="18" viewBox="0 0 36 18" className="shrink-0">
      <path d="M1 9h10M25 9h10" stroke="#111" strokeWidth="2" />
      <path d="M11 3h3v13h-3zM23 3h3v13h-3z" fill="#111" />
      {(mark === '↑' || mark === '↓') && <path d="M18.5 3v12" stroke="#e8282c" strokeWidth="2" />}
      {mark === '↑' && <path d="M15 7l3.5-5L22 7" stroke="#e8282c" fill="none" />}
      {mark === '↓' && <path d="M15 11l3.5 5 3.5-5" stroke="#e8282c" fill="none" />}
      {mark === '!' && <path d="M17 2h3l-1 9h-1zM17 13h3v3h-3z" fill="#e8282c" />}
    </svg>
  );
}

function KeyCell({ label, keys, box, font }: { label: string; keys: string; box: string; font: string }) {
  return (
    <div className={`flex shrink-0 flex-col items-center border-r border-[#555] bg-[#e4e5e4] whitespace-nowrap ${box}`}>
      <span className={`leading-[9px] ${font}`}>{label}</span>
      <span className="font-['Liberation_Serif'] text-[12px] leading-[10px] font-bold text-[#e8282c]">{keys}</span>
    </div>
  );
}

function InfoWindow() {
  return (
    <aside className="absolute top-[12px] right-[164px] flex h-[69px] w-[407px] flex-col border border-[#8f918f] bg-[#fdfefd] pr-[5px] pl-[3px] shadow-[2px_3px_8px_rgba(0,0,0,0.35)]">
      <h2 className="h-[27px] font-['Noto_Sans',sans-serif] text-[12px] leading-[24px] text-[#9a9b9a]">CX-Programmer Information</h2>
      <div className="flex flex-1 overflow-hidden border-t-2 border-l border-[#8f918f] text-[#111]">
        <div className="flex flex-col border-l border-[#555]">
          <div className="flex h-[19px] shrink-0 border-b border-[#555]">
            {CONTACTS.map((c) => (
              <div key={c.label} className={`flex shrink-0 items-center border-r border-[#555] bg-[#e4e5e4] ${c.box}`}>
                <Contact mark={c.mark} />
                <div className="flex flex-1 flex-col items-center whitespace-nowrap">
                  <span className={`leading-[8px] ${c.font}`}>{c.label}</span>
                  <span className="font-['Liberation_Serif'] text-[12px] leading-[10px] font-bold text-[#e8282c]">{c.key}</span>
                </div>
              </div>
            ))}
          </div>
          <div className="flex">
            <div className="flex w-[200px] flex-col">
              <div className="flex h-[6px] items-start justify-center overflow-hidden border-b border-[#555] bg-[#f5f6f5]">
                <span className="font-['DejaVu_Sans'] text-[14px] leading-[10px]">Find Address</span>
              </div>
              <div className="flex">
                <KeyCell label="Next" keys="Shift+N" box="w-[67px]" font={WIDE} />
                <KeyCell label="Previous" keys="Shift+B" box="w-[66px]" font={WIDE} />
                <KeyCell label="Next In/Out" keys="SPACE" box="w-[67px]" font={NARROW} />
              </div>
            </div>
            <KeyCell label="Commented Rung" keys="Shift+L" box="w-[64px] pt-[2px]" font={NARROW} />
            <KeyCell label="Jump to Error" keys="Shift+J" box="w-[66px] pt-[2px]" font={NARROW} />
          </div>
        </div>
        <div className="flex flex-1 flex-col items-center border-r border-[#555] bg-[#e4e5e4] pt-[2px] whitespace-nowrap">
          <span className="font-['Noto_Sans'] text-[9px] leading-[10px]">Information</span>
          <span className={`leading-[10px] ${NARROW}`}>Show/Hide</span>
          <span className="mt-[4px] font-['Liberation_Serif'] text-[10px] leading-[12px] font-bold text-[#e8282c]">Ctrl+Shift+I</span>
        </div>
      </div>
    </aside>
  );
}

const SUNKEN = 'border-2 border-t-[#868886] border-l-[#868886] border-r-[#f6f7f6] border-b-[#f6f7f6] bg-[#eff1ef]';
const RAISED = 'border-2 border-t-[#f4f5f4] border-l-[#f4f5f4] border-r-[#868886] border-b-[#868886] bg-[#e3e5e3]';
const GROUP = 'border border-[#a6a8a6] pl-[10px] shadow-[1px_1px_0_#f6f7f6]';
const LEGEND = 'ml-[-4px] px-[2px] leading-[16px]';

function DialogButton({ text, hotkey, primary }: { text: string; hotkey?: string; primary?: boolean }) {
  return (
    <button
      type="button"
      className={`flex h-[21px] w-[75px] items-center justify-center leading-[16px] ${RAISED} ${primary ? 'outline-1 -outline-offset-1 outline-[#6a6c6a]' : ''}`}
    >
      {text}
      {hotkey && <span className="font-['Liberation_Mono'] text-[10px]">{hotkey}</span>}
    </button>
  );
}

function DropDown({ label, value, options }: { label: string; value: string; options: string[] }) {
  return (
    <div className="relative">
      <select
        aria-label={label}
        defaultValue={value}
        className={`block h-[19px] w-[194px] appearance-none rounded-none pl-px font-['Liberation_Mono'] text-[10px] leading-[14px] ${SUNKEN}`}
      >
        {options.map((o) => (
          <option key={o}>{o}</option>
        ))}
      </select>
      <span className={`pointer-events-none absolute top-[2px] right-[2px] flex h-[15px] w-[16px] items-center justify-center ${RAISED}`}>
        <svg width="7" height="4" className="shrink-0"><path d="M0 0h7L3.5 4z" fill="#111" /></svg>
      </span>
    </div>
  );
}

function ChangePlcDialog() {
  const nameRef = useRef<HTMLInputElement>(null);

  useEffect(() => {
    nameRef.current?.focus();
    nameRef.current?.select();
  }, []);

  return (
    <div
      role="dialog"
      aria-label="变更PLC"
      className="relative w-[320px] border border-[#6a6c6a] bg-[#e3e5e3] text-[12px] text-[#222] shadow-[0_4px_14px_rgba(0,0,0,0.45)]"
    >
      <div className="flex h-[26px] items-center justify-between bg-[#f0f2f0] pr-[9px] pb-[2px] pl-[3px]">
        <h2>变更PLC</h2>
        <button type="button" aria-label="close">
          <svg width="11" height="11" stroke="#333"><path d="M.5.5l10 10M10.5.5l-10 10" /></svg>
        </button>
      </div>
      <form className="pr-[11px] pb-[7px] pl-[12px]">
        <fieldset className={`pb-[7px] ${GROUP}`}>
          <legend className={LEGEND}>
            <label htmlFor="device-name">设备名称</label>
          </legend>
          <input
            id="device-name"
            ref={nameRef}
            defaultValue="新PLC1"
            className={`mt-px block h-[16px] w-[191px] font-['Liberation_Mono','Noto_Sans_CJK_SC',monospace] text-[11px] leading-[12px] outline-none selection:bg-[#2a80c8] selection:text-[#e4f2fb] ${SUNKEN}`}
          />
        </fieldset>
        <fieldset className={`mt-[2px] pb-[6px] ${GROUP}`}>
          <legend className={LEGEND}>设备类型</legend>
          <div className="flex items-center gap-[8px] pt-[2px]">
            <DropDown label="设备类型" value="CJ1M" options={['CJ1M', 'CJ1G', 'CP1H', 'CS1G']} />
            <DialogButton text="设定" hotkey="(S)..." />
          </div>
        </fieldset>
        <fieldset className={`mt-[2px] pb-[25px] ${GROUP}`}>
          <legend className={LEGEND}>网络类型</legend>
          <div className="flex items-center gap-[8px] pt-px">
            <DropDown label="网络类型" value="Toolbus" options={['Toolbus', 'SYSMAC WAY', 'USB']} />
            <DialogButton text="设定" hotkey="(E)..." />
          </div>
        </fieldset>
        <fieldset className={`mt-[4px] pb-[7px] ${GROUP}`}>
          <legend className={LEGEND}>
            <label htmlFor="note">注释</label>
          </legend>
          <div className="relative mt-[2px] w-[275px]">
            <textarea id="note" className={`block h-[59px] w-full resize-none ${SUNKEN}`} />
            <div className="absolute top-[2px] right-[2px] flex h-[55px] w-[15px] flex-col items-center justify-between bg-[#e6e8e6] py-[6px]">
              <svg width="9" height="6" fill="none" stroke="#b4b6b4" strokeWidth="2"><path d="M1 5l3.5-4L8 5" /></svg>
              <svg width="9" height="6" fill="none" stroke="#b4b6b4" strokeWidth="2"><path d="M1 1l3.5 4L8 1" /></svg>
            </div>
          </div>
        </fieldset>
        <div className="mt-[10px] flex gap-[9px]">
          <DialogButton text="确定" primary />
          <DialogButton text="取消" />
          <div className="ml-auto">
            <DialogButton text="帮助" hotkey="(H)" />
          </div>
        </div>
      </form>
      <svg width="13" height="20" viewBox="0 0 13 20" className="absolute top-[128px] left-[218px]">
        <path d="M.5 1v16l3.5-3.500 2.500 6 3-1-2.500-5.500h5z" fill="#fff" stroke="#000" />
      </svg>
    </div>
  );
}

const PANES = [
  { box: 'w-[20px]', text: '' },
  { box: 'w-[66px]', text: '' },
  { box: 'w-[256px]', text: '' },
  { box: 'w-[56px]', text: '' },
  { box: 'w-[56px]', text: '' },
  { box: 'w-[131px]', text: '' },
  { box: 'w-[106px]', text: '' },
  { box: 'w-[61px]', text: '智能' },
  { box: 'w-[29px]', text: '' },
  { box: 'w-[37px]', text: 'NUM' },
];

function StatusBar() {
  return (
    <div className="flex h-[21px] items-end gap-[2px] border-t border-white bg-[#eff1ef] text-[12px] text-[#111]">
      <span className="flex-1 pl-[2px] leading-[18px]">需要帮助，请按F1</span>
      {PANES.map((p, i) => (
        <div key={i} className={`h-[17px] border border-t-[#9a9c9a] border-r-white border-b-white border-l-[#9a9c9a] pl-[2px] leading-[16px] ${p.box}`}>
          {p.text}
        </div>
      ))}
    </div>
  );
}

const APPS: { name: string; state: string; icon: ReactNode }[] = [
  {
    name: 'explorer',
    state: 'border-transparent w-[49px]',
    icon: (
      <svg width="24" height="24" viewBox="0 0 24 24">
        <path d="M1 3h8l2 2h12v5H1z" fill="#e0a42b" />
        <path d="M1 6h22v14H1z" fill="#fbd768" />
        <path d="M5 21v-8h14v8h-4v-4H9v4z" fill="#3d8fd1" />
      </svg>
    ),
  },
  {
    name: 'edge',
    state: 'border-transparent w-[49px]',
    icon: (
      <svg width="24" height="24" viewBox="0 0 24 24">
        <circle cx="12" cy="12" r="12" fill="#1577c8" />
        <path d="M0 11C1 4 6 0 12 0c7 0 12 5 12 10 0 4-3 6-6 6-3 0-4-1-3-3 1-3-2-6-6-6C5 7 1 9 0 11z" fill="#2fb7dd" />
        <path d="M13 0c7 0 11 5 11 10 0 4-3 6-6 6-3 0-4-1-3-3 1-4-1-8-2-13z" fill="#54c96a" />
        <path d="M9 11c-2 5 2 11 8 10 2 0 4-1 5-3-4 8-15 7-17 0-1-4 1-7 4-7z" fill="#0d4d94" />
        <path d="M15 13c1-2 0-4-2-5-3 1-5 4-4 7 1 4 6 6 11 4 1 0 3-2 3-3-2 1-8 2-8-3z" fill="#3a3b3a" />
      </svg>
    ),
  },
  {
    name: 'mail',
    state: 'border-transparent w-[49px]',
    icon: (
      <svg width="24" height="24" viewBox="0 0 24 24">
        <path d="M0 8l12-7 12 7v6H0z" fill="#0f5fa8" />
        <path d="M3 8h18v7H3z" fill="#f4f8fb" />
        <path d="M0 8l12 8 12-8v15H0z" fill="#38b0ea" />
        <path d="M24 8v15L12 15.5z" fill="#1c86d4" />
      </svg>
    ),
  },
  {
    name: 'game',
    state: 'border-transparent w-[49px]',
    icon: (
      <svg width="24" height="24" viewBox="0 0 24 24">
        <path d="M4 1l5 2c7-2 13 3 13 10 0 6-4 10-10 10S1 19 1 13c0-4 1-8 3-12z" fill="#e5483f" />
        <circle cx="13" cy="8" r="5" fill="#fff" />
        <circle cx="13" cy="8" r="2" fill="#111" />
        <path d="M14 9l5 3-3 3-3-2z" fill="#f2b632" />
        <circle cx="18" cy="16" r="2.5" fill="#161616" />
        <path d="M19 18l4 2v3l-4-3z" fill="#161616" />
      </svg>
    ),
  },
  {
    name: 'store',
    state: 'border-transparent w-[49px]',
    icon: (
      <svg width="24" height="24" viewBox="0 0 24 24">
        <path d="M6.5 6V1h11v5" fill="none" stroke="#f4f4f4" strokeWidth="2" />
        <path d="M1 5h23l-1 19H2z" fill="#f4f4f4" />
        <path d="M8 10h4v4H8z" fill="#e8532b" />
        <path d="M13 10h4v4h-4z" fill="#7cb52c" />
        <path d="M8 15h4v4H8z" fill="#2aa3e3" />
        <path d="M13 15h4v4h-4z" fill="#f5b81c" />
      </svg>
    ),
  },
  {
    name: 'wps',
    state: 'border-[#76b0e6] w-[40px] mx-[5px]',
    icon: (
      <svg width="22" height="22" viewBox="0 0 22 22">
        <rect width="22" height="22" rx="2" fill="#3a86f2" />
        <path d="M4 7h3l2 8 3-6 2 6 3.5-8H9" fill="none" stroke="#fff" strokeWidth="1.5" />
      </svg>
    ),
  },
  { name: 'cx-programmer', state: 'border-[#76b0e6] bg-[#686a69] w-[48px]', icon: <PlcLogo size={24} /> },
];

function TaskBar() {
  return (
    <footer className="flex h-[40px] bg-[linear-gradient(90deg,#393a39_0%,#393a39_50%,#2b2c31_56%,#222434_60%,#222434_66%,#383939_71%,#3b3c3a_78%,#2c2d30_83%,#26272f_90%,#2b2c30_96%)] text-white">
      <button type="button" aria-label="start" className="flex w-[48px] items-center justify-center">
        <svg width="16" height="16" fill="#fff"><path d="M0 2.5l7-1v6H0zM8 1.3L16 0v7.5H8zM0 8.5h7v6l-7-1zM8 8.5h8V16l-8-1.2z" /></svg>
      </button>
      <label className="flex w-[344px] items-center gap-[12px] border border-[#b4b6b4] bg-[#eff1ef] pl-[11px]">
        <svg width="16" height="16" fill="none" stroke="#222" className="shrink-0"><path d="M.5 15.5l6-6M5.5 6a4.8 4.8 0 1 0 9.6 0a4.8 4.8 0 1 0-9.6 0" strokeWidth="1.3" /></svg>
        <input
          type="search"
          placeholder="在这里输入你要搜索的内容"
          className="min-w-0 flex-1 bg-transparent text-[14px] outline-none placeholder:text-[#333]"
        />
      </label>
      <button type="button" aria-label="cortana" className="flex w-[48px] items-center justify-center">
        <svg width="16" height="16" fill="none" stroke="#fff" strokeWidth="2"><circle cx="8" cy="8" r="7" /></svg>
      </button>
      <button type="button" aria-label="task view" className="mr-[2px] flex w-[48px] items-center justify-center">
        <svg width="16" height="16" fill="none" stroke="#fff"><path d="M.5 0v3.5h10V0M.5 16v-3.5h10V16M.5 5.5h10v5H.5zM14.5 0v3M14.5 8v8" /><path d="M13 4h3v3h-3z" fill="#fff" stroke="none" /></svg>
      </button>
      {APPS.map((a) => (
        <button key={a.name} type="button" aria-label={a.name} className={`flex items-center justify-center border-b-2 ${a.state}`}>
          {a.icon}
        </button>
      ))}
      <div className="ml-auto flex items-center">
        <span className="mr-[28px] flex h-[16px] w-[16px] items-center justify-center bg-white text-[13px] leading-[16px] text-black">拼</span>
        <svg width="12" height="7" fill="none" stroke="#fff" strokeWidth="1.5" className="mr-[10px]"><path d="M1 6l5-5 5 5" /></svg>
        <svg width="16" height="12" fill="none" stroke="#fff" className="mr-[8px]"><path d="M4.5 3.5h10v6h-10zM1.5 0v2M3.5 0v2M.5 2.5h4v2l-1 1h-2l-1-1zM2.5 6v3h2M15.5 5v3" /><path d="M6 4h8v5H6z" fill="#fff" stroke="none" /></svg>
        <svg width="16" height="14" fill="none" stroke="#fff" className="mr-[8px]"><path d="M5 2.5h10.5v8H4.5V6M.5 1.5h4v3h-4zM2.5 5v6.5h2M10 11v2M6.5 13.5h7" /></svg>
        <svg width="17" height="14" fill="none" stroke="#fff" className="mr-[9px]"><path d="M.5 5.5h2l4-3.5v10l-4-3.5h-2zM8.5 5q1.5 2 0 4M10.5 3q3 4 0 8" /><path d="M13 1.5q4 5.5 0 11" stroke="#888" /></svg>
        <div className="flex w-[62px] flex-col items-center font-['Noto_Sans',sans-serif] text-[12px] leading-[19px]">
          <time>17:16</time>
          <time>2021/1/31</time>
        </div>
        <svg width="16" height="16" fill="none" stroke="#fff" className="mr-[19px] ml-[18px]"><path d="M.5 1.5h15v11H10L8 15l-2-2.5H.5z" /></svg>
        <div className="mr-[4px] h-[40px] w-px bg-[#777]" />
      </div>
    </footer>
  );
}

function App() {
  return (
    <div className="relative flex h-screen flex-col overflow-hidden bg-[#eff1ef] font-['Noto_Sans_CJK_SC',sans-serif]">
      <TitleBar />
      <div className="border-t border-[#9a9c9a]">
        {ROWS.map((bars, r) => (
          <div key={r} className="flex gap-px">
            {bars.map((groups, b) => (
              <ToolBar key={b} groups={groups} last={r === ROWS.length - 1} />
            ))}
          </div>
        ))}
      </div>
      <main className="mr-[2px] ml-px flex-1 border-t-2 border-l border-[#6e706e] bg-[#a8aaa7]" />
      <StatusBar />
      <TaskBar />
      <InfoWindow />
      <div className="pointer-events-none absolute inset-x-0 top-0 bottom-[43px] flex items-center justify-center">
        <div className="pointer-events-auto">
          <ChangePlcDialog />
        </div>
      </div>
    </div>
  );
}

export default App;
